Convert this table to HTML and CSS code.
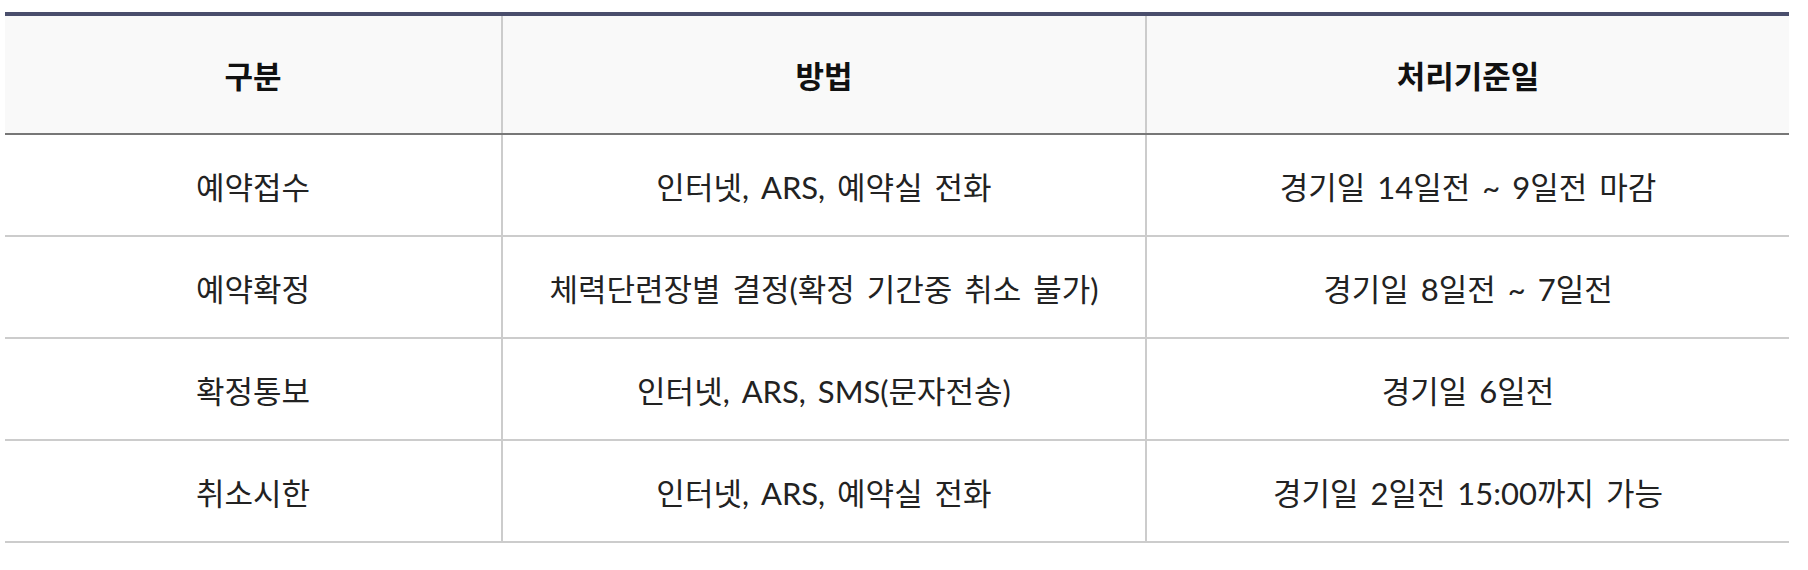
FILE: index.html
```html
<!DOCTYPE html>
<html lang="ko">
<head>
<meta charset="utf-8">
<title>예약 안내</title>
<link rel="stylesheet" href="styles.css">
</head>
<body>
<div class="wrap">
<table class="info">
  <colgroup>
    <col class="c1"><col class="c2"><col class="c3">
  </colgroup>
  <thead>
    <tr><th>구분</th><th>방법</th><th>처리기준일</th></tr>
  </thead>
  <tbody>
    <tr><td>예약접수</td><td>인터넷, ARS, 예약실 전화</td><td>경기일 14일전 ~ 9일전 마감</td></tr>
    <tr><td>예약확정</td><td>체력단련장별 결정(확정 기간중 취소 불가)</td><td>경기일 8일전 ~ 7일전</td></tr>
    <tr><td>확정통보</td><td>인터넷, ARS, SMS(문자전송)</td><td>경기일 6일전</td></tr>
    <tr><td>취소시한</td><td>인터넷, ARS, 예약실 전화</td><td>경기일 2일전 15:00까지 가능</td></tr>
  </tbody>
</table>
</div>
</body>
</html>
```
FILE: styles.css
```css
html, body {
  margin: 0;
  padding: 0;
  background: #fff;
}
.wrap {
  padding: 12px 0 0 5px;
}
.info {
  width: 1784px;
  border-collapse: collapse;
  table-layout: fixed;
  font-family: Lato, "Noto Sans CJK KR", sans-serif;
  border-top: 4px solid #4a4e6c;
}
.c1 { width: 497px; }
.c2 { width: 644px; }
.c3 { width: 643px; }
.info th {
  height: 117px;
  padding: 0;
  background: #f9f9f9;
  font-size: 31px;
  font-weight: 700;
  color: #111;
  text-align: center;
  vertical-align: middle;
  border-bottom: 2px solid #777;
  border-left: 2px solid #ccc;
}
.info td {
  height: 100px;
  padding: 0;
  font-size: 31px;
  font-weight: 400;
  color: #222;
  text-align: center;
  vertical-align: middle;
  word-spacing: 4px;
  border-bottom: 2px solid #ccc;
  border-left: 2px solid #ccc;
}
.info th:first-child,
.info td:first-child {
  border-left: none;
}
```
